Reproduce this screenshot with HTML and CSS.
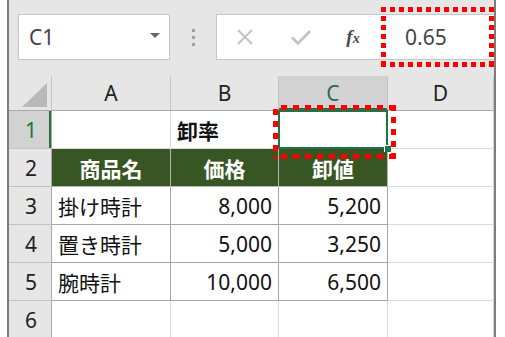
FILE: index.html
```html
<!DOCTYPE html>
<html lang="ja">
<head>
  <meta charset="UTF-8" />
  <meta name="viewport" content="width=device-width, initial-scale=1.0" />
  <title>卸値の計算</title>
  <link rel="stylesheet" href="styles.css">
</head>
<body>
  <div class="excel">
    <div class="formulaBar">
      <div class="nameBox">
        <span>C1</span>
        <span class="caret"></span>
      </div>
      <div class="grip"><i></i><i></i><i></i></div>
      <div class="formulaBox">
        <span class="fxButton">
          <svg width="18" height="18" viewBox="0 0 18 18"><path d="M2 2 L16 16 M16 2 L2 16" stroke="#c2c2c2" stroke-width="2" fill="none"/></svg>
        </span>
        <span class="fxButton">
          <svg width="22" height="17" viewBox="0 0 22 17"><path d="M2 8.5 L8 14.5 L20 2" stroke="#c2c2c2" stroke-width="2.6" fill="none"/></svg>
        </span>
        <span class="fxButton fxLabel">f<small>x</small></span>
        <div class="formulaValue">0.65</div>
        <div class="callout calloutFormula"></div>
      </div>
    </div>

    <div class="sheet">
      <div class="corner">
        <svg width="43" height="35" viewBox="0 0 43 35"><path d="M38 7 L38 31 L13 31 Z" fill="#b9b9b9"/></svg>
      </div>
      <div class="colHead">A</div>
      <div class="colHead">B</div>
      <div class="colHead current">C</div>
      <div class="colHead">D</div>

      <div class="rowHead current">1</div>
      <div class="cell"></div>
      <div class="cell bold">卸率</div>
      <div class="cell selected">
        <div class="callout calloutCell"></div>
      </div>
      <div class="cell"></div>

      <div class="rowHead">2</div>
      <div class="cell table title">商品名</div>
      <div class="cell table title">価格</div>
      <div class="cell table title">卸値</div>
      <div class="cell"></div>

      <div class="rowHead">3</div>
      <div class="cell table">掛け時計</div>
      <div class="cell table num">8,000</div>
      <div class="cell table num">5,200</div>
      <div class="cell"></div>

      <div class="rowHead">4</div>
      <div class="cell table">置き時計</div>
      <div class="cell table num">5,000</div>
      <div class="cell table num">3,250</div>
      <div class="cell"></div>

      <div class="rowHead">5</div>
      <div class="cell table">腕時計</div>
      <div class="cell table num">10,000</div>
      <div class="cell table num">6,500</div>
      <div class="cell"></div>

      <div class="rowHead">6</div>
      <div class="cell"></div>
      <div class="cell"></div>
      <div class="cell"></div>
      <div class="cell"></div>
    </div>
  </div>
</body>
</html>
```

FILE: styles.css
```css
body {
  margin: 0;
  background: #fff;
  font-family: 'Noto Sans', 'Noto Sans CJK JP', sans-serif;
  overflow: hidden;
}
.excel {
  margin-left: 7px;
  width: 485px;
  height: 337px;
  border-left: 2px solid #7d7d7d;
  border-right: 2px solid #7d7d7d;
  background: #e6e6e6;
}
.formulaBar {
  display: flex;
  height: 76px;
  padding: 14px 0 0 9px;
  box-sizing: border-box;
}
.nameBox {
  width: 152px;
  height: 46px;
  box-sizing: border-box;
  border: 1px solid #c6c6c6;
  background: #fff;
  display: flex;
  align-items: center;
  justify-content: space-between;
  padding: 0 9px 0 10px;
  font-size: 21px;
  color: #444;
}
.caret {
  width: 0;
  height: 0;
  border-left: 5px solid transparent;
  border-right: 5px solid transparent;
  border-top: 5px solid #666;
  margin-bottom: 4px;
}
.grip {
  width: 46px;
  display: flex;
  flex-direction: column;
  align-items: center;
  justify-content: center;
  gap: 4px;
  height: 46px;
}
.grip i {
  width: 3px;
  height: 3px;
  background: #a0a0a0;
}
.formulaBox {
  flex: 1;
  height: 46px;
  box-sizing: border-box;
  border: 1px solid #c6c6c6;
  border-right: none;
  background: #fff;
  display: flex;
  align-items: center;
  position: relative;
}
.fxButton {
  width: 56px;
  display: flex;
  justify-content: center;
  align-items: center;
}
.fxLabel {
  width: 48px;
  margin-right: 4px;
  font-family: 'Liberation Serif', serif;
  font-style: italic;
  font-weight: bold;
  font-size: 19px;
  color: #4a4a4a;
}
.fxLabel small {
  font-size: 14px;
  margin-top: 4px;
}
.formulaValue {
  padding-left: 24px;
  font-size: 21px;
  color: #444;
}
.callout {
  position: absolute;
  pointer-events: none;
  z-index: 3;
  background:
    repeating-linear-gradient(90deg, #f00 0 5px, transparent 5px 9px) left top / 100% 5px no-repeat,
    repeating-linear-gradient(90deg, #f00 0 5px, transparent 5px 9px) left bottom / 100% 5px no-repeat,
    repeating-linear-gradient(180deg, #f00 0 5px, transparent 5px 9px) left top / 5px 100% no-repeat,
    repeating-linear-gradient(180deg, #f00 0 5px, transparent 5px 9px) right top / 5px 100% no-repeat;
}
.calloutFormula {
  left: 164px;
  top: -8px;
  width: 113px;
  height: 60px;
}
.calloutCell {
  left: -6px;
  top: -6px;
  width: 123px;
  height: 54px;
  background:
    repeating-linear-gradient(90deg, #f00 0 6px, transparent 6px 12px) 8px top / 100% 5px no-repeat,
    repeating-linear-gradient(90deg, #f00 0 6px, transparent 6px 12px) 8px bottom / 100% 5px no-repeat,
    repeating-linear-gradient(180deg, #f00 0 6px, transparent 6px 12px) left 4px / 5px 100% no-repeat,
    repeating-linear-gradient(180deg, #f00 0 6px, transparent 6px 12px) right top / 5px 100% no-repeat;
}
.sheet {
  display: grid;
  grid-template-columns: 43px 119px 108px 109px 106px;
  grid-template-rows: 35px repeat(6, 38px);
  font-size: 21px;
}
.corner {
  border-right: 1px solid #c4c4c4;
  border-bottom: 1px solid #ababab;
  box-sizing: border-box;
}
.corner svg {
  display: block;
}
.colHead, .rowHead {
  display: flex;
  align-items: center;
  justify-content: center;
  box-sizing: border-box;
  color: #222;
  background: #e6e6e6;
}
.colHead {
  border-right: 1px solid #c4c4c4;
  border-bottom: 1px solid #ababab;
}
.rowHead {
  border-right: 1px solid #ababab;
  border-bottom: 1px solid #c4c4c4;
  padding-left: 2px;
}
.colHead.current {
  background: #d2d2d2;
  color: #2f6a5a;
  box-shadow: inset 0 -2px #217346;
}
.rowHead.current {
  background: #d2d2d2;
  color: #217346;
  box-shadow: inset -2px 0 #217346;
}
.cell {
  background: #fff;
  border-right: 1px solid #d9d9d9;
  border-bottom: 1px solid #d9d9d9;
  box-sizing: border-box;
  display: flex;
  align-items: center;
  padding: 0 6px;
  color: #111;
  position: relative;
}
.cell.bold {
  font-weight: bold;
}
.cell.table {
  border-color: #a6a6a6;
}
.cell.title {
  background: #375623;
  color: #fff;
  font-weight: bold;
  justify-content: center;
  border-color: #b7b7b7;
}
.cell.num {
  justify-content: flex-end;
}
.cell.selected {
  z-index: 2;
}
.selected::after {
  content: '';
  position: absolute;
  left: -1px;
  top: -1px;
  right: -1px;
  bottom: -1px;
  border: 2px solid #217346;
}
.selected::before {
  content: '';
  position: absolute;
  right: -4px;
  bottom: -4px;
  width: 6px;
  height: 6px;
  background: #217346;
  border-left: 1px solid #fff;
  border-top: 1px solid #fff;
  z-index: 1;
}
```
